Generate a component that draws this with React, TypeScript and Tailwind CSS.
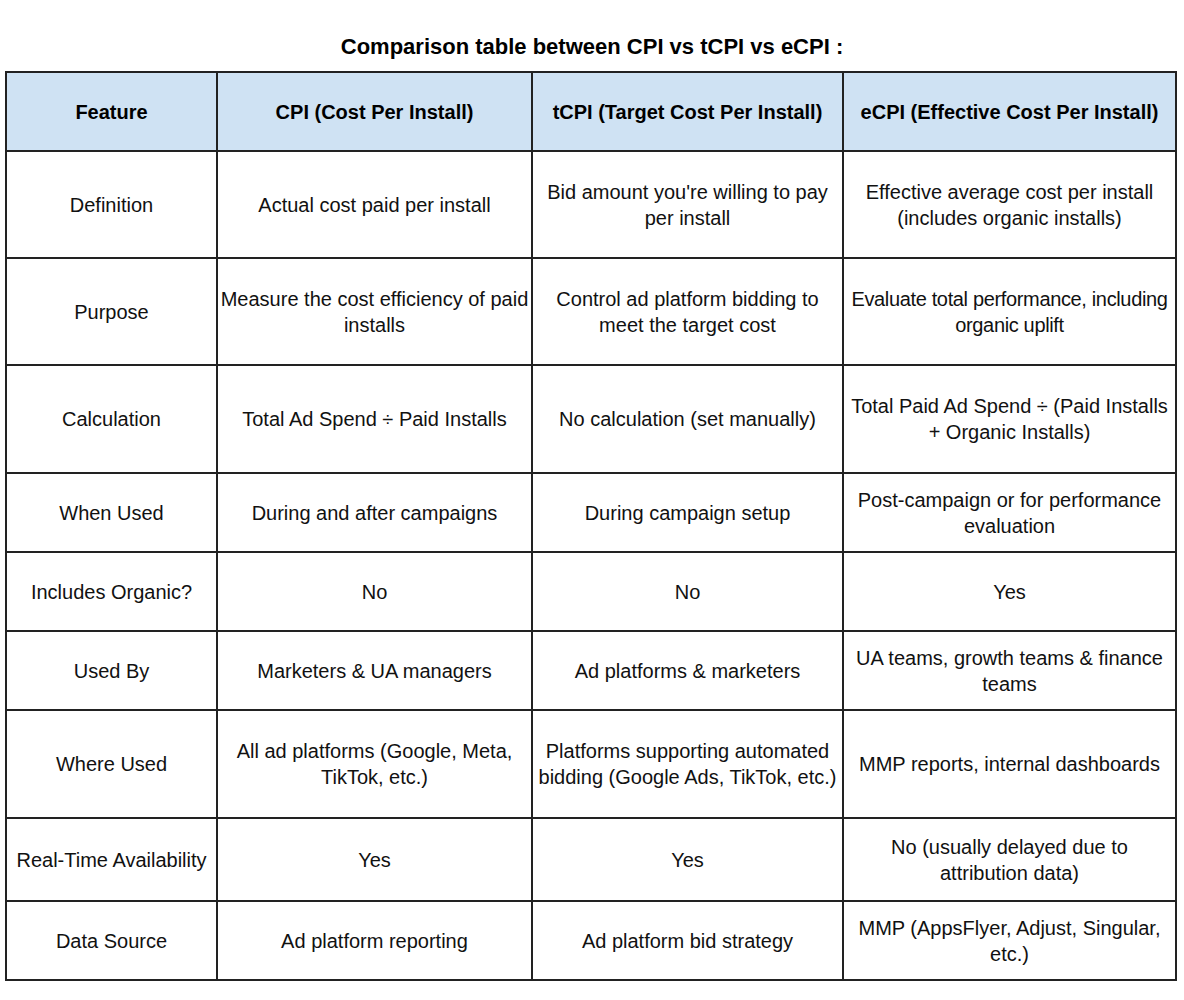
const headers = [
  'Feature',
  'CPI (Cost Per Install)',
  'tCPI (Target Cost Per Install)',
  'eCPI (Effective Cost Per Install)',
];

const rows: { h: string; cells: string[] }[] = [
  {
    h: 'h-[107px]',
    cells: [
      'Definition',
      'Actual cost paid per install',
      "Bid amount you're willing to pay per install",
      'Effective average cost per install (includes organic installs)',
    ],
  },
  {
    h: 'h-[107px]',
    cells: [
      'Purpose',
      'Measure the cost efficiency of paid installs',
      'Control ad platform bidding to meet the target cost',
      'Evaluate total performance, including organic uplift',
    ],
  },
  {
    h: 'h-[108px]',
    cells: [
      'Calculation',
      'Total Ad Spend ÷ Paid Installs',
      'No calculation (set manually)',
      'Total Paid Ad Spend ÷ (Paid Installs + Organic Installs)',
    ],
  },
  {
    h: 'h-[79px]',
    cells: [
      'When Used',
      'During and after campaigns',
      'During campaign setup',
      'Post-campaign or for performance evaluation',
    ],
  },
  {
    h: 'h-[79px]',
    cells: ['Includes Organic?', 'No', 'No', 'Yes'],
  },
  {
    h: 'h-[79px]',
    cells: [
      'Used By',
      'Marketers & UA managers',
      'Ad platforms & marketers',
      'UA teams, growth teams & finance teams',
    ],
  },
  {
    h: 'h-[108px]',
    cells: [
      'Where Used',
      'All ad platforms (Google, Meta, TikTok, etc.)',
      'Platforms supporting automated bidding (Google Ads, TikTok, etc.)',
      'MMP reports, internal dashboards',
    ],
  },
  {
    h: 'h-[83px]',
    cells: [
      'Real-Time Availability',
      'Yes',
      'Yes',
      'No (usually delayed due to attribution data)',
    ],
  },
  {
    h: 'h-[79px]',
    cells: [
      'Data Source',
      'Ad platform reporting',
      'Ad platform bid strategy',
      'MMP (AppsFlyer, Adjust, Singular, etc.)',
    ],
  },
];

// this one runs edge to edge in the original, so squeeze it a touch
const tight = 'Evaluate total performance, including organic uplift';

export default function App() {
  return (
    <div
      className="w-[1184px] h-[1000px] bg-white text-[#111] overflow-hidden"
      style={{ fontFamily: '"Liberation Sans", Arial, sans-serif' }}
    >
      <h1 className="pt-[34px] mb-[11px] text-center text-[22px] leading-[26px] font-bold text-black">
        Comparison table between CPI vs tCPI vs eCPI :
      </h1>
      <table className="ml-[5px] w-[1170px] table-fixed border-collapse border-2 border-[#222]">
        <colgroup>
          <col className="w-[211px]" />
          <col className="w-[315px]" />
          <col className="w-[311px]" />
          <col className="w-[333px]" />
        </colgroup>
        <thead>
          <tr className="h-[79px] bg-[#cfe2f3]">
            {headers.map((t) => (
              <th
                key={t}
                className="border-2 border-[#222] px-[1px] text-center align-middle text-[20px] leading-[26px] font-bold text-black"
              >
                {t}
              </th>
            ))}
          </tr>
        </thead>
        <tbody>
          {rows.map((r) => (
            <tr key={r.cells[0]} className={r.h}>
              {r.cells.map((c, i) => (
                <td
                  key={i}
                  className={
                    c === tight
                      ? 'border-2 border-[#222] px-0 text-center align-middle text-[20px] leading-[26px] tracking-[-0.35px]'
                      : 'border-2 border-[#222] px-[1px] text-center align-middle text-[20px] leading-[26px]'
                  }
                >
                  {c}
                </td>
              ))}
            </tr>
          ))}
        </tbody>
      </table>
    </div>
  );
}
